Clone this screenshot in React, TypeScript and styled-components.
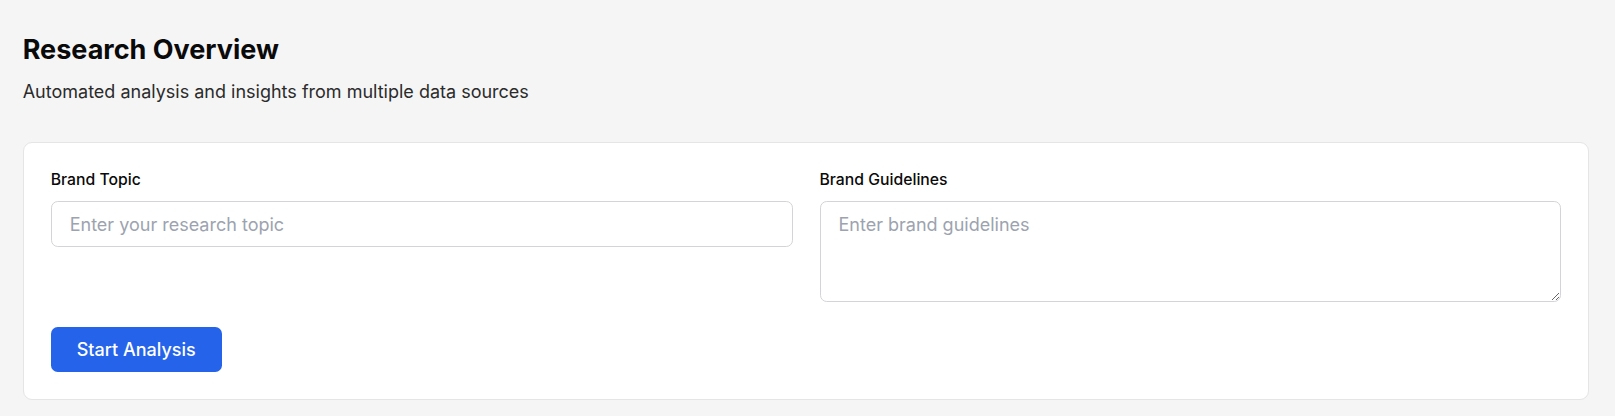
import React from "react";
import styled, { createGlobalStyle } from "styled-components";

const GlobalStyle = createGlobalStyle`
  html, body {
    margin: 0;
    padding: 0;
    background: #f5f5f5;
    font-family: Inter, "Noto Sans", "Liberation Sans", sans-serif;
  }
  * { box-sizing: border-box; }
`;

const Page = styled.main`
  padding: 32px 25.7px 17px 22.7px;
`;

const Header = styled.header`
  display: flex;
  flex-direction: column;
  gap: 9.7px;
  margin-bottom: 37px;
`;

const Title = styled.h1`
  margin: 0;
  font-size: 27px;
  line-height: 36px;
  font-weight: 700;
  color: #0a0a0a;
`;

const Subtitle = styled.p`
  margin: 0;
  font-size: 18px;
  line-height: 27px;
  font-weight: 400;
  color: #2b2b2b;
`;

const Card = styled.section`
  background: #ffffff;
  border: 1px solid #e5e5e5;
  border-radius: 9px;
  padding: 27px;
  display: flex;
  flex-direction: column;
  gap: 24.7px;
`;

const Fields = styled.div`
  display: grid;
  grid-template-columns: 1fr 1fr;
  gap: 27px;
  align-items: start;
`;

const Field = styled.div`
  display: flex;
  flex-direction: column;
  gap: 11.6px;
`;

const Label = styled.label`
  font-size: 15.75px;
  line-height: 20px;
  font-weight: 500;
  color: #0a0a0a;
`;

const fieldBase = `
  width: 100%;
  font-family: Inter, "Noto Sans", "Liberation Sans", sans-serif;
  font-size: 18px;
  line-height: 27px;
  color: #111827;
  background: #ffffff;
  border: 1px solid #d4d4d8;
  border-radius: 6.75px;
  padding: 8.5px 18px;
  outline: none;
  margin: 0;
  display: block;
  &::placeholder { color: #9ca3af; opacity: 1; }
`;

const TextInput = styled.input`
  ${fieldBase}
  height: 46px;
`;

const TextArea = styled.textarea`
  ${fieldBase}
  height: 101px;
  resize: vertical;
`;

const Actions = styled.div`
  display: flex;
`;

const PrimaryButton = styled.button`
  font-family: Inter, "Noto Sans", "Liberation Sans", sans-serif;
  font-size: 18px;
  line-height: 27px;
  font-weight: 500;
  color: #ffffff;
  background: #2563eb;
  border: none;
  border-radius: 6.75px;
  height: 45px;
  padding: 0 26px;
  cursor: pointer;
`;

export default function App() {
  return (
    <>
      <GlobalStyle />
      <Page>
        <Header>
          <Title>Research Overview</Title>
          <Subtitle>Automated analysis and insights from multiple data sources</Subtitle>
        </Header>
        <Card>
          <Fields>
            <Field>
              <Label htmlFor="topic">Brand Topic</Label>
              <TextInput id="topic" placeholder="Enter your research topic" />
            </Field>
            <Field>
              <Label htmlFor="guidelines">Brand Guidelines</Label>
              <TextArea id="guidelines" placeholder="Enter brand guidelines" />
            </Field>
          </Fields>
          <Actions>
            <PrimaryButton>Start Analysis</PrimaryButton>
          </Actions>
        </Card>
      </Page>
    </>
  );
}
